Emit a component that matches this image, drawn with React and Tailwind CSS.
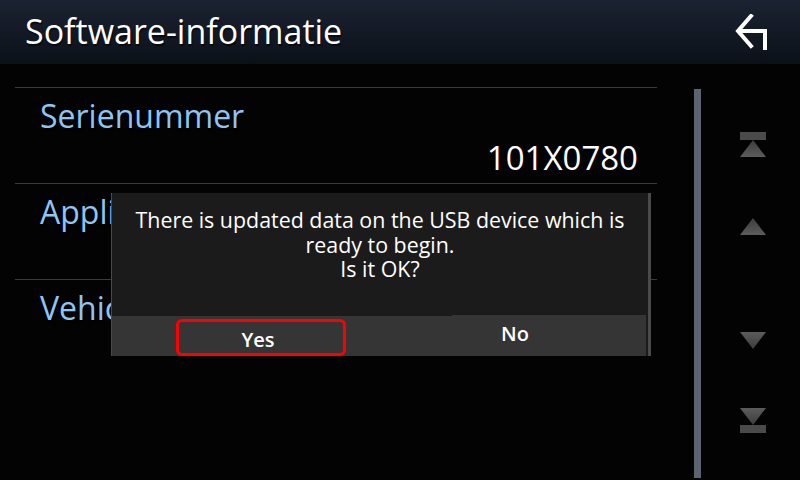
import React from 'react'

const rows = [
  { label: 'Serienummer', value: '101X0780' },
  { label: 'Application', value: '' },
  { label: 'Vehicle', value: '' },
]

const font = { fontFamily: '"Open Sans", "Noto Sans", sans-serif' }

const Tri = ({ up }) => (
  <svg width="26" height="17" viewBox="0 0 26 17">
    <defs>
      <linearGradient id={up ? 'gu' : 'gd'} x1="0" y1="0" x2="0" y2="1">
        <stop offset="0" stopColor={up ? '#3c3c3c' : '#5c5c5c'} />
        <stop offset="1" stopColor={up ? '#5c5c5c' : '#3c3c3c'} />
      </linearGradient>
    </defs>
    <polygon points={up ? '13,0 26,17 0,17' : '0,0 26,0 13,17'} fill={`url(#${up ? 'gu' : 'gd'})`} />
  </svg>
)

const Bar = () => <div className="w-[26px] h-[8px] bg-[#4a4a4a]" />

const App = () => {
  return (
    <div className="w-[800px] h-[480px] bg-[#030303] relative overflow-hidden" style={font}>
      {/* header */}
      <div className="h-16 flex items-center justify-between pl-[25px] pr-[30px] bg-gradient-to-b from-[#1b2332] to-[#0c1118]">
        <div className="text-white text-[34px] leading-none pb-[2px] [text-shadow:1px_2px_1px_rgba(0,0,0,0.6)]">Software-informatie</div>
        <svg width="36" height="38" viewBox="0 0 36 38" className="mt-[2px]">
          <path d="M17 2 L4 17 L17 32" stroke="white" strokeWidth="4" fill="none" strokeLinecap="square" />
          <path d="M5 17 H31 V36" stroke="white" strokeWidth="4" fill="none" />
        </svg>
      </div>

      <div className="flex">
        {/* list */}
        <div className="w-[642px] ml-[15px] mt-[23px]">
          {rows.map((r) => (
            <div key={r.label} className="h-24 border-t border-[#3a3a3a] flex flex-col pl-[25px] pr-[19px] pt-[8px]">
              <div className="text-[#8ec5f5] text-[32px] leading-[40px] [text-shadow:1px_2px_1px_rgba(0,0,0,0.7)]">{r.label}</div>
              <div className="text-white text-[33px] leading-[40px] text-right mt-[2px]">{r.value}</div>
            </div>
          ))}
        </div>

        {/* scrollbar */}
        <div className="ml-[37px] mt-[25px] w-[7px] h-[389px] bg-[#5b6470]" />

        {/* scroll buttons */}
        <div className="ml-[39px] mt-[68px] flex flex-col items-center">
          <Bar />
          <Tri up />
          <div className="h-[61px]" />
          <Tri up />
          <div className="h-[97px]" />
          <Tri />
          <div className="h-[59px]" />
          <Tri />
          <Bar />
        </div>
      </div>

      {/* dialog */}
      <div className="absolute left-[111px] top-[193px] w-[540px] h-[163px] bg-[#1b1b1b] border-l border-r-[3px] border-[#4a4a4a] flex flex-col">
        <div className="flex-1 pt-[15px] text-white text-[21.4px] leading-[24.5px] text-center">
          There is updated data on the USB device which is
          <br />
          ready to begin.
          <br />
          Is it OK?
        </div>
        <div className="h-[41px] flex mr-[2px]">
          <div className="w-[340px] bg-[#353535] mt-[1px] flex items-stretch pl-[64px] pr-[106px]">
            <div className="flex-1 mt-[3px] border-[3px] border-[#ff0000] rounded-[6px] flex items-center justify-center text-white text-[20px] font-semibold pt-[4px] pr-[6px]">
              Yes
            </div>
          </div>
          <div className="flex-1 bg-[#353535] flex items-center pl-[49px] text-white text-[20px] font-semibold pb-[4px]">
            No
          </div>
        </div>
      </div>
    </div>
  )
}

export default App
